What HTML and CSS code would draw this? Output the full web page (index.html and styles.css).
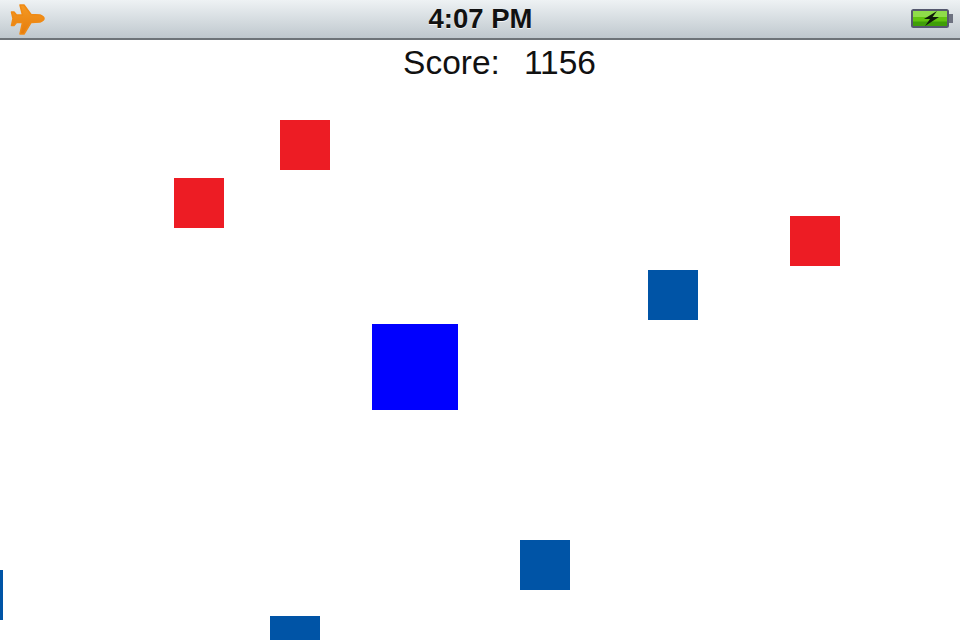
FILE: index.html
```html
<!DOCTYPE html>
<html lang="en">
<head>
  <meta charset="UTF-8" />
  <title>Score Game</title>
  <link rel="stylesheet" href="styles.css">
</head>
<body>
  <div class="status-bar">
    <svg class="plane" width="36" height="38" viewBox="10 0 36 38">
      <defs>
        <linearGradient id="planeFill" x1="0" y1="0" x2="0" y2="1">
          <stop offset="0" stop-color="#f59a24"/>
          <stop offset="1" stop-color="#e57c0c"/>
        </linearGradient>
      </defs>
      <path d="M20 5 L24 5 L31 14.500 L40 15 Q44 16.500 44 18.500 Q44 20.500 40 22 L31 22.500 L24 34 L20 34 L22.500 22.500 L16.500 22.500 L14 25.500 L11.500 25.500 L13 18.500 L11.500 12 L14 12 L16.500 15 L22.500 15 Z" fill="url(#planeFill)" stroke="#f08a14" stroke-width="1.500" stroke-linejoin="round"/>
    </svg>
    <div class="clock">4:07 PM</div>
    <svg class="battery" width="44" height="20" viewBox="0 0 44 20">
      <rect x="1" y="1" width="36" height="17" rx="1.500" fill="#62c410" stroke="#55586e" stroke-width="2"/>
      <rect x="2" y="2" width="34" height="6" fill="#8fdc4a"/>
      <rect x="2" y="12.500" width="34" height="4.500" fill="#3f9e08"/>
      <rect x="38" y="5" width="4" height="9" fill="#6d7280"/>
      <path d="M26 2 L13 10 L19 10 L14 17 L28 8 L21.500 8 Z" fill="#101a0a"/>
    </svg>
  </div>
  <div class="score"><span>Score:</span><span>1156</span></div>
  <div class="field">
    <div class="block red" style="left:280px;top:120px"></div>
    <div class="block red" style="left:174px;top:178px"></div>
    <div class="block red" style="left:790px;top:216px"></div>
    <div class="block teal" style="left:648px;top:270px"></div>
    <div class="block player" style="left:372px;top:324px"></div>
    <div class="block teal" style="left:520px;top:540px"></div>
    <div class="block teal" style="left:270px;top:616px"></div>
    <div class="block teal" style="left:-47px;top:570px"></div>
  </div>
</body>
</html>
```

FILE: styles.css
```css
html, body {
  margin: 0;
  height: 100%;
  overflow: hidden;
  background: white;
}
body {
  font-family: "Liberation Sans", Arial, sans-serif;
  color: #111;
}
.status-bar {
  height: 38px;
  display: flex;
  align-items: center;
  justify-content: space-between;
  padding: 0 5px 0 10px;
  background: linear-gradient(#eef2f4, #bfc8ce);
  border-bottom: 2px solid #6e7479;
  position: relative;
}
.clock {
  position: absolute;
  left: 1px;
  right: 0;
  text-align: center;
  font-size: 27.500px;
  font-weight: bold;
  text-shadow: 0 1px 0 rgba(255,255,255,0.8);
}
.score {
  display: flex;
  justify-content: center;
  gap: 24px;
  padding-left: 39px;
  font-size: 33.500px;
  line-height: 46px;
}
.block {
  position: absolute;
  width: 50px;
  height: 50px;
}
.red {
  background: #ed1c24;
}
.teal {
  background: #0054a6;
}
.player {
  width: 86px;
  height: 86px;
  background: #0000ff;
}
```
